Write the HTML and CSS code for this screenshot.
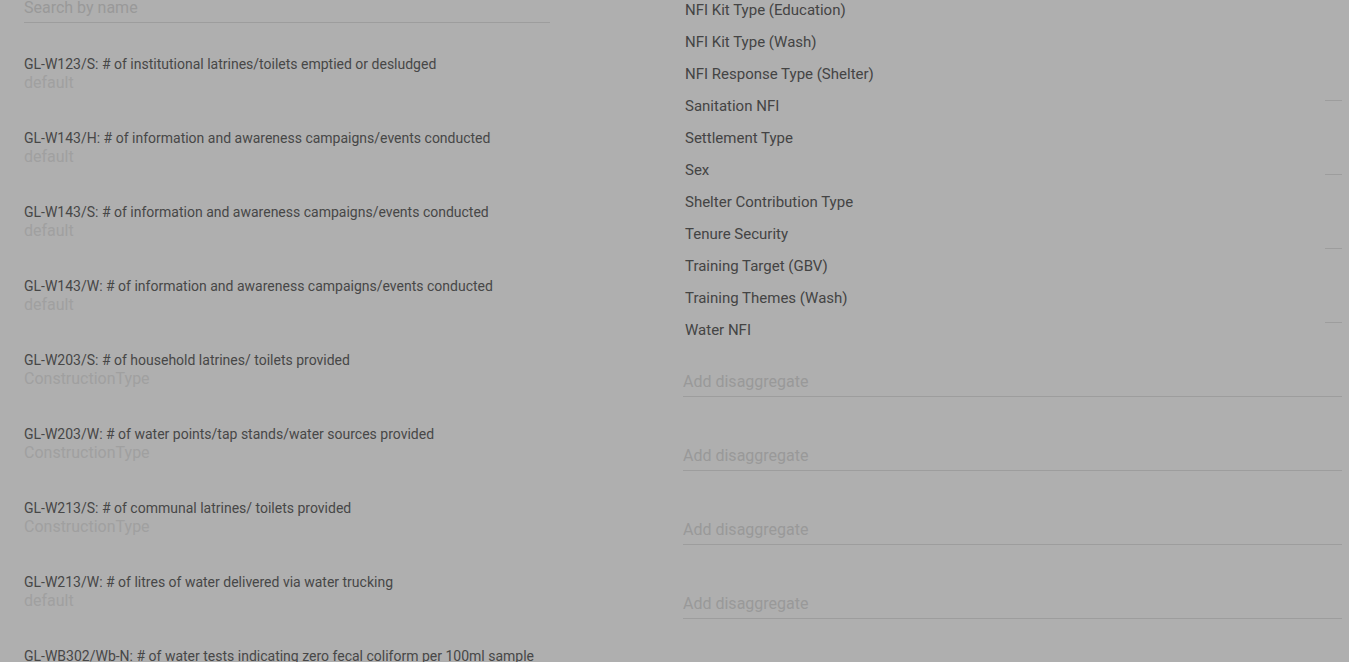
FILE: index.html
```html
<!DOCTYPE html>
<html lang="en">
<head>
<meta charset="utf-8">
<title>Indicators</title>
<link rel="stylesheet" href="styles.css">
</head>
<body>
<div class="page">
  <div class="search-row">
    <input class="search" type="text" placeholder="Search by name">
  </div>
  <div class="rows">
    <div class="row">
      <div class="info"><div class="title">GL-W123/S: # of institutional latrines/toilets emptied or desludged</div><div class="sub">default</div></div>
      <div class="field"><input class="disagg" type="text" placeholder="Add disaggregate"></div>
    </div>
    <div class="row">
      <div class="info"><div class="title">GL-W143/H: # of information and awareness campaigns/events conducted</div><div class="sub">default</div></div>
      <div class="field"><input class="disagg" type="text" placeholder="Add disaggregate"></div>
    </div>
    <div class="row">
      <div class="info"><div class="title">GL-W143/S: # of information and awareness campaigns/events conducted</div><div class="sub">default</div></div>
      <div class="field"><input class="disagg" type="text" placeholder="Add disaggregate"></div>
    </div>
    <div class="row">
      <div class="info"><div class="title">GL-W143/W: # of information and awareness campaigns/events conducted</div><div class="sub">default</div></div>
      <div class="field"><input class="disagg" type="text" placeholder="Add disaggregate"></div>
    </div>
    <div class="row">
      <div class="info"><div class="title">GL-W203/S: # of household latrines/ toilets provided</div><div class="sub">ConstructionType</div></div>
      <div class="field"><input class="disagg" type="text" placeholder="Add disaggregate"></div>
    </div>
    <div class="row">
      <div class="info"><div class="title">GL-W203/W: # of water points/tap stands/water sources provided</div><div class="sub">ConstructionType</div></div>
      <div class="field"><input class="disagg" type="text" placeholder="Add disaggregate"></div>
    </div>
    <div class="row">
      <div class="info"><div class="title">GL-W213/S: # of communal latrines/ toilets provided</div><div class="sub">ConstructionType</div></div>
      <div class="field"><input class="disagg" type="text" placeholder="Add disaggregate"></div>
    </div>
    <div class="row">
      <div class="info"><div class="title">GL-W213/W: # of litres of water delivered via water trucking</div><div class="sub">default</div></div>
      <div class="field"><input class="disagg" type="text" placeholder="Add disaggregate"></div>
    </div>
    <div class="row">
      <div class="info"><div class="title">GL-WB302/Wb-N: # of water tests indicating zero fecal coliform per 100ml sample</div><div class="sub">default</div></div>
      <div class="field"><input class="disagg" type="text" placeholder="Add disaggregate"></div>
    </div>
  </div>

  <div class="panel">
    <div class="option">NFI Kit Type (Education)</div>
    <div class="option">NFI Kit Type (Wash)</div>
    <div class="option">NFI Response Type (Shelter)</div>
    <div class="option">Sanitation NFI</div>
    <div class="option">Settlement Type</div>
    <div class="option">Sex</div>
    <div class="option">Shelter Contribution Type</div>
    <div class="option">Tenure Security</div>
    <div class="option">Training Target (GBV)</div>
    <div class="option">Training Themes (Wash)</div>
    <div class="option">Water NFI</div>
  </div>
</div>
</body>
</html>
```
FILE: styles.css
```css
html, body {
  margin: 0;
  padding: 0;
  background: #afafaf;
  overflow: hidden;
}

body {
  font-family: Roboto, "Liberation Sans", Arial, sans-serif;
  color: #454545;
}

.page {
  position: relative;
  padding: 0 7px 0 24px;
}

.search-row {
  width: 526px;
  margin-top: -2px;
}

.search,
.disagg {
  display: block;
  box-sizing: content-box;
  width: 100%;
  height: 20px;
  margin: 0;
  padding: 0 0 4px 0;
  border: none;
  border-bottom: 1px solid #9d9d9d;
  background: transparent;
  font-family: Roboto, "Liberation Sans", Arial, sans-serif;
  font-size: 16px;
  line-height: 20px;
  color: #454545;
  outline: none;
}

.search::placeholder,
.disagg::placeholder {
  color: #999999;
  opacity: 1;
}

.rows {
  margin-top: 31px;
}

.row {
  display: grid;
  grid-template-columns: 526px 1fr;
  column-gap: 133px;
  height: 74px;
  align-items: start;
}

.title {
  font-size: 14px;
  line-height: 20px;
  color: #474747;
  white-space: nowrap;
}

.sub {
  font-size: 16px;
  line-height: 17px;
  color: #a0a0a0;
}

.field {
  padding-top: 22px;
}

.panel {
  position: absolute;
  top: -4px;
  left: 669px;
  width: 656px;
  background: #afafaf;
}

.option {
  height: 32px;
  line-height: 32px;
  padding: 0 16px;
  font-size: 15px;
  color: #444444;
  white-space: nowrap;
}
```
